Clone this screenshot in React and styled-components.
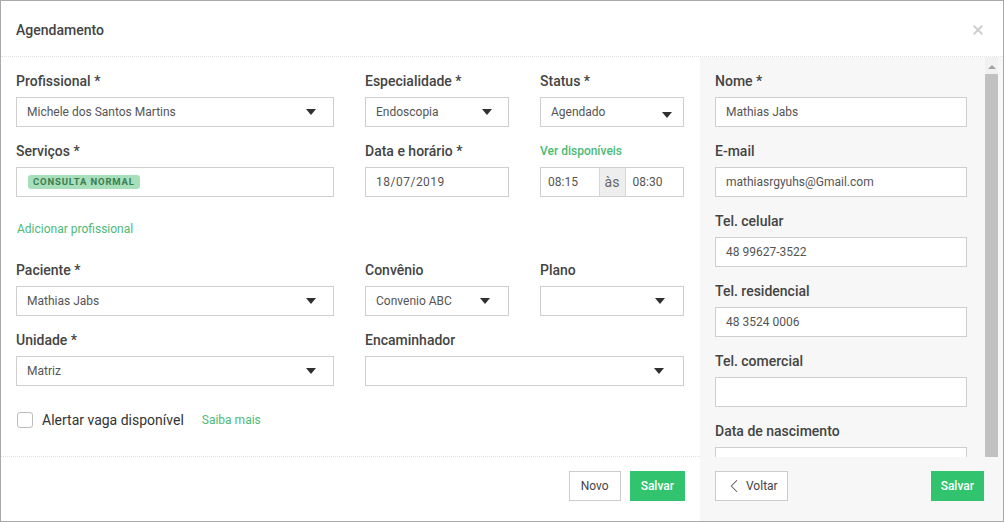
import React from "react";
import styled, { createGlobalStyle } from "styled-components";
import { ChevronLeft } from "lucide-react";

const Global = createGlobalStyle`
  html, body { margin: 0; padding: 0; background: #fff; }
  body { font-family: Roboto, "Noto Sans", Arial, sans-serif; color: #333; }
  * { box-sizing: border-box; }
`;

const Modal = styled.div`
  width: 1004px;
  height: 522px;
  border: 1px solid #a9a9a9;
  display: flex;
  flex-direction: column;
  background: #fff;
  overflow: hidden;
`;

const Header = styled.div`
  height: 56px;
  flex: none;
  display: flex;
  align-items: center;
  justify-content: space-between;
  padding: 3px 20px 0 15px;
  border-bottom: 1px dotted #e2e2e2;
`;

const Title = styled.div`
  font-size: 14px;
  font-weight: 500;
  color: #444;
`;

const Close = styled.div`
  width: 10px;
  height: 10px;
  position: relative;
  &::before, &::after {
    content: "";
    position: absolute;
    left: 4px;
    top: -1px;
    width: 2px;
    height: 12px;
    background: #cfcfcf;
  }
  &::before { transform: rotate(45deg); }
  &::after { transform: rotate(-45deg); }
`;

const Main = styled.div`
  flex: 1;
  display: flex;
  min-height: 0;
`;

const LeftPanel = styled.div`
  width: 699px;
  flex: none;
  display: flex;
  flex-direction: column;
`;

const LeftBody = styled.div`
  height: 400px;
  flex: none;
  padding: 13px 16px 0 15px;
  border-bottom: 1px dotted #e2e2e2;
`;

const Row = styled.div`
  display: grid;
  grid-template-columns: 318px 144px 144px;
  column-gap: 31px;
`;

const Field = styled.div`
  margin-bottom: 13px;
  grid-column: ${(p) => (p.$span ? `span ${p.$span}` : "auto")};
`;

const Label = styled.div`
  height: 20px;
  line-height: 22px;
  margin-bottom: 7px;
  font-size: ${(p) => (p.$link ? "12px" : "14px")};
  font-weight: 500;
  color: ${(p) => (p.$link ? "#4dba76" : "#444")};
  white-space: nowrap;
`;

const Box = styled.div`
  height: 30px;
  border: 1px solid #cfcfcf;
  background: #fff;
  display: flex;
  align-items: center;
  padding: 0 ${(p) => p.$pr ?? 17}px 0 10px;
  font-size: 12px;
  color: #555;
  letter-spacing: ${(p) => p.$ls || "0"};
`;

const BoxText = styled.span`
  flex: 1;
  white-space: nowrap;
  overflow: hidden;
`;

const Arrow = styled.span`
  width: 0;
  height: 0;
  border-left: 5px solid transparent;
  border-right: 5px solid transparent;
  border-top: 6px solid #2f2f2f;
  margin-top: ${(p) => (p.$low ? 5 : 0)}px;
`;

const Tag = styled.span`
  display: inline-block;
  height: 14px;
  line-height: 14px;
  padding: 0 5px;
  border-radius: 3px;
  background: #a7dfbb;
  color: #3a7d52;
  font-size: 9.5px;
  font-weight: 700;
  letter-spacing: 0.85px;
  margin-left: 1px;
`;

const TimeGroup = styled.div`
  height: 30px;
  border: 1px solid #cfcfcf;
  display: flex;
  font-size: 12px;
  color: #555;
`;

const TimeCell = styled.div`
  flex: ${(p) => (p.$addon ? "0 0 27px" : "1")};
  display: flex;
  align-items: center;
  justify-content: ${(p) => (p.$addon ? "center" : "flex-start")};
  padding-left: ${(p) => (p.$addon ? 0 : 7)}px;
  background: ${(p) => (p.$addon ? "#eeeeee" : "#fff")};
  font-size: ${(p) => (p.$addon ? "14px" : "12px")};
  color: ${(p) => (p.$addon ? "#666" : "#555")};
  border-left: ${(p) => (p.$addon ? "1px solid #d8d8d8" : "none")};
  border-right: ${(p) => (p.$addon ? "1px solid #d8d8d8" : "none")};
`;

const LinkLine = styled.div`
  margin: 11px 0 22px 1px;
  height: 16px;
  line-height: 17px;
  font-size: 12px;
  color: #4dba76;
`;

const CheckRow = styled.div`
  display: flex;
  align-items: center;
  height: 20px;
  margin-top: 11px;
  margin-left: 1px;
`;

const Check = styled.span`
  width: 16px;
  height: 16px;
  border: 1px solid #bdbdbd;
  border-radius: 3px;
  background: #fff;
  margin-right: 9px;
`;

const CheckText = styled.span`
  font-size: 14px;
  color: #333;
  margin-right: 18px;
`;

const SmallLink = styled.span`
  font-size: 12px;
  color: #4dba76;
`;

const Footer = styled.div`
  flex: 1;
  display: flex;
  align-items: flex-start;
  justify-content: ${(p) => p.$justify || "flex-end"};
  gap: 9px;
  padding: 14px ${(p) => p.$pr ?? 15}px 0 ${(p) => p.$pl ?? 15}px;
  background: ${(p) => p.$bg || "#fff"};
`;

const Button = styled.button`
  height: 30px;
  padding: 0 ${(p) => p.$pr ?? 10}px 0 ${(p) => p.$pl ?? 10}px;
  font-family: inherit;
  font-size: 12px;
  display: inline-flex;
  align-items: center;
  border: 1px solid ${(p) => (p.$primary ? "#31c36d" : "#cccccc")};
  background: ${(p) => (p.$primary ? "#31c36d" : "#fff")};
  color: ${(p) => (p.$primary ? "#fff" : "#444")};
  font-weight: ${(p) => (p.$primary ? 500 : 400)};
  border-radius: 0;
  cursor: pointer;
`;

const BackIcon = styled(ChevronLeft)`
  margin: 0 1px 0 -2px;
`;

const RightPanel = styled.div`
  flex: 1;
  background: #f7f7f7;
  display: flex;
  flex-direction: column;
`;

const RightBody = styled.div`
  height: 400px;
  flex: none;
  display: flex;
  padding-right: 5px;
`;

const RightScroll = styled.div`
  flex: 1;
  overflow: hidden;
  padding: 13px 0 0 15px;
`;

const RightField = styled.div`
  width: 252px;
  margin-bottom: 13px;
`;

const Scrollbar = styled.div`
  width: 13px;
  flex: none;
  display: flex;
  flex-direction: column;
  align-items: center;
  background: #f1f1f1;
`;

const ScrollArrow = styled.span`
  margin-top: 8px;
  width: 0;
  height: 0;
  border-left: 4px solid transparent;
  border-right: 4px solid transparent;
  border-bottom: 4px solid #a3a3a3;
`;

const Thumb = styled.div`
  margin-top: 5px;
  width: 13px;
  flex: 1;
  background: #c1c1c1;
`;

const Select = ({ value, pr, low }) => (
  <Box $pr={pr}>
    <BoxText>{value}</BoxText>
    <Arrow $low={low} />
  </Box>
);

const rightFields = [
  ["Nome *", "Mathias Jabs"],
  ["E-mail", "mathiasrgyuhs@Gmail.com"],
  ["Tel. celular", "48 99627-3522"],
  ["Tel. residencial", "48 3524 0006"],
  ["Tel. comercial", ""],
  ["Data de nascimento", ""],
];

export default function App() {
  return (
    <>
      <Global />
      <Modal>
        <Header>
          <Title>Agendamento</Title>
          <Close />
        </Header>
        <Main>
          <LeftPanel>
            <LeftBody>
              <Row>
                <Field>
                  <Label>Profissional *</Label>
                  <Select value="Michele dos Santos Martins" />
                </Field>
                <Field>
                  <Label>Especialidade *</Label>
                  <Select value="Endoscopia" pr={16} />
                </Field>
                <Field>
                  <Label>Status *</Label>
                  <Select value="Agendado" pr={11} low />
                </Field>
              </Row>
              <Row>
                <Field>
                  <Label>Serviços *</Label>
                  <Box>
                    <Tag>CONSULTA NORMAL</Tag>
                  </Box>
                </Field>
                <Field>
                  <Label>Data e horário *</Label>
                  <Box $ls="0.5px">18/07/2019</Box>
                </Field>
                <Field>
                  <Label $link>Ver disponíveis</Label>
                  <TimeGroup>
                    <TimeCell>08:15</TimeCell>
                    <TimeCell $addon>às</TimeCell>
                    <TimeCell>08:30</TimeCell>
                  </TimeGroup>
                </Field>
              </Row>
              <LinkLine>Adicionar profissional</LinkLine>
              <Row>
                <Field>
                  <Label>Paciente *</Label>
                  <Select value="Mathias Jabs" />
                </Field>
                <Field>
                  <Label>Convênio</Label>
                  <Select value="Convenio ABC" pr={18} />
                </Field>
                <Field>
                  <Label>Plano</Label>
                  <Select value="" pr={18} />
                </Field>
              </Row>
              <Row>
                <Field>
                  <Label>Unidade *</Label>
                  <Select value="Matriz" />
                </Field>
                <Field $span={2}>
                  <Label>Encaminhador</Label>
                  <Select value="" pr={19} />
                </Field>
              </Row>
              <CheckRow>
                <Check />
                <CheckText>Alertar vaga disponível</CheckText>
                <SmallLink>Saiba mais</SmallLink>
              </CheckRow>
            </LeftBody>
            <Footer>
              <Button $pl={11} $pr={11}>Novo</Button>
              <Button $primary>Salvar</Button>
            </Footer>
          </LeftPanel>
          <RightPanel>
            <RightBody>
              <RightScroll>
                {rightFields.map(([label, value]) => (
                  <RightField key={label}>
                    <Label>{label}</Label>
                    <Box>{value}</Box>
                  </RightField>
                ))}
              </RightScroll>
              <Scrollbar>
                <ScrollArrow />
                <Thumb />
              </Scrollbar>
            </RightBody>
            <Footer $justify="space-between" $bg="#f7f7f7" $pr={19}>
              <Button $pl={9} $pr={9}>
                <BackIcon size={22} strokeWidth={1.1} color="#555" />
                Voltar
              </Button>
              <Button $primary $pl={9} $pr={9}>Salvar</Button>
            </Footer>
          </RightPanel>
        </Main>
      </Modal>
    </>
  );
}
